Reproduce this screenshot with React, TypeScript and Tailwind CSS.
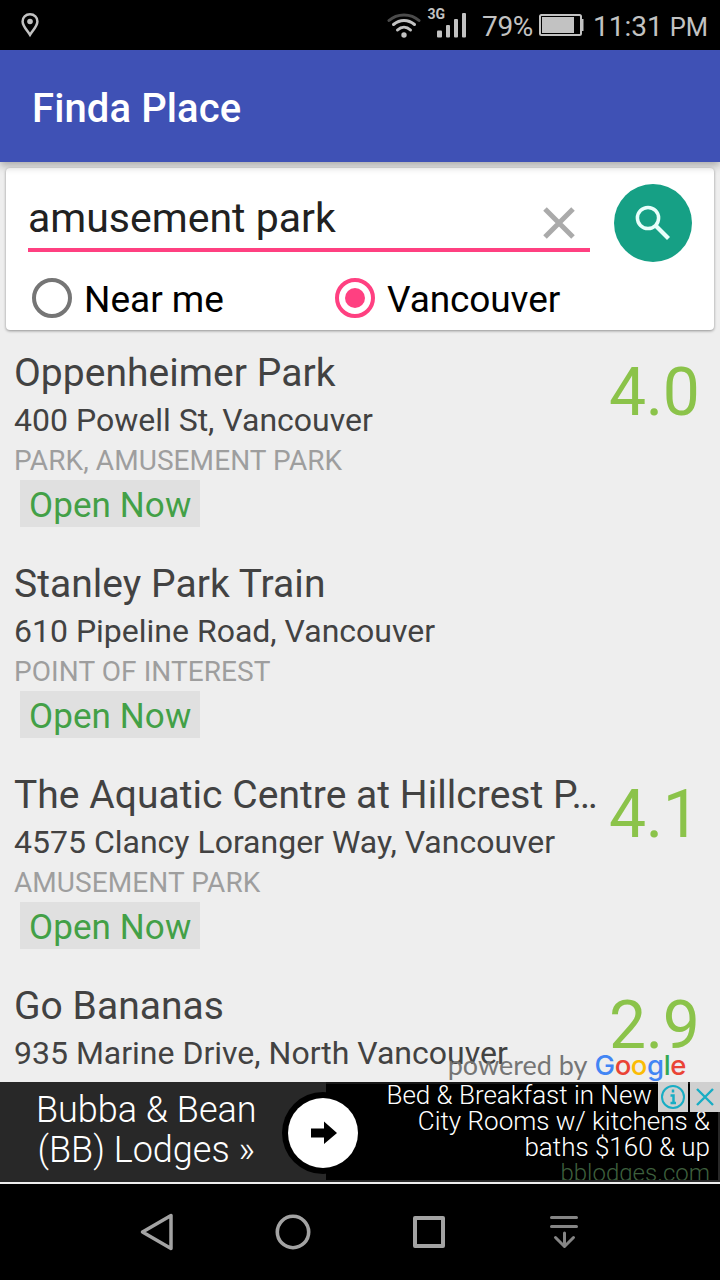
import React from "react";

type Place = { name: string; address: string; kinds: string; rating?: string };

const places: Place[] = [
  { name: "Oppenheimer Park", address: "400 Powell St, Vancouver", kinds: "PARK, AMUSEMENT PARK", rating: "4.0" },
  { name: "Stanley Park Train", address: "610 Pipeline Road, Vancouver", kinds: "POINT OF INTEREST" },
  { name: "The Aquatic Centre at Hillcrest P…", address: "4575 Clancy Loranger Way, Vancouver", kinds: "AMUSEMENT PARK", rating: "4.1" },
  { name: "Go Bananas", address: "935 Marine Drive, North Vancouver", kinds: "AMUSEMENT PARK", rating: "2.9" },
];

function StatusBar() {
  return (
    <div className="flex h-[50px] shrink-0 items-center bg-black pl-[20px] pr-[12px] text-[#c2c2c2]">
      <svg className="h-[26px] w-[20px]" viewBox="0 0 20 26" fill="none">
        <path d="M10 2.3C5.6 2.3 2.6 5.5 2.6 9.4C2.6 14 7 18 10 22.8C13 18 17.4 14 17.4 9.4C17.4 5.5 14.4 2.3 10 2.3Z" stroke="currentColor" strokeWidth="2.5" />
        <circle cx="10" cy="9.5" r="2.8" fill="currentColor" />
      </svg>
      <div className="flex-1" />
      <svg className="h-[50px] w-[84px]" viewBox="387 0 84 50" fill="none" strokeLinecap="round">
        <path d="M389 20.5C397 13 411 13 419 20.5" stroke="#4b4b4b" strokeWidth="3" />
        <path d="M393.5 24.5C400 19 408 19 414.5 24.5" stroke="currentColor" strokeWidth="3" />
        <path d="M397.5 30C401.5 26.2 406.5 26.2 410.500 30" stroke="currentColor" strokeWidth="3" />
        <circle cx="404" cy="35" r="2.7" fill="currentColor" />
        <rect x="437" y="30.500" width="5" height="7" rx="1" fill="currentColor" />
        <rect x="446" y="25" width="4" height="12.500" rx="1" fill="currentColor" />
        <rect x="454" y="19" width="4" height="18.500" rx="1" fill="currentColor" />
        <rect x="462" y="13" width="4" height="24.500" rx="1" fill="currentColor" />
        <text x="427.500" y="18.800" fontSize="14" fontWeight="700" fill="currentColor" className="font-[Roboto]">3G</text>
      </svg>
      <span className="ml-[11px] w-[56px] whitespace-nowrap text-[28px] leading-[50px] tracking-[-0.3px] pt-[3px]">79%</span>
      <svg className="h-[24px] w-[48px]" viewBox="0 0 48 24" fill="none">
        <rect x="2" y="2" width="41" height="20" rx="1.500" stroke="currentColor" strokeWidth="2" />
        <rect x="4" y="4" width="32" height="16" fill="currentColor" />
        <path d="M43 6H45.500V18H43Z" fill="currentColor" />
      </svg>
      <span className="ml-[7px] whitespace-nowrap text-[28px] leading-[50px] pt-[4px]">
        11:31 <span className="text-[25.5px]">PM</span>
      </span>
    </div>
  );
}

function SearchCard() {
  return (
    <div className="px-[6px] pt-[6px]">
      <div className="flex h-[162px] flex-col rounded-[4px] bg-white shadow-[0_1px_3px_rgba(0,0,0,0.4)]">
        <div className="flex h-[102px] pl-[22px]">
          <div className="mt-[16px] flex h-[68px] w-[562px] items-center justify-between border-b-4 border-[#ff4081]">
            <span className="mt-[3px] text-[41px] leading-[50px] text-[#212121]">amusement park</span>
            <svg className="mr-[14px] mt-[13px] h-[34px] w-[34px]" viewBox="0 0 34 34">
              <path d="M3 3L31 31M31 3L3 31" stroke="#aaaaaa" strokeWidth="5" />
            </svg>
          </div>
          <svg className="ml-[23px] mt-[15px] h-[80px] w-[80px]" viewBox="0 0 80 80" fill="none">
            <circle cx="40" cy="40" r="39" fill="#16a085" />
            <circle cx="35" cy="35" r="10.600" stroke="#e8fffb" strokeWidth="3.500" />
            <path d="M42.500 42.500L55.500 55.500" stroke="#e8fffb" strokeWidth="4.200" />
          </svg>
        </div>
        <div className="flex h-[56px] text-[37px] leading-[52px] text-black">
          <div className="flex w-[303px] items-center pl-[26px]">
            <span className="h-[40px] w-[40px] rounded-full border-4 border-[#757575]" />
            <span className="ml-[12px] mt-[3px]">Near me</span>
          </div>
          <div className="flex items-center pl-[26px]">
            <span className="flex h-[40px] w-[40px] items-center justify-center rounded-full border-4 border-[#ff4081]">
              <span className="h-[20px] w-[20px] rounded-full bg-[#ff4081]" />
            </span>
            <span className="ml-[12px] mt-[3px] tracking-[-0.1px]">Vancouver</span>
          </div>
        </div>
      </div>
    </div>
  );
}

function PlaceRow({ place }: { place: Place }) {
  return (
    <div className="flex h-[211px] shrink-0 pl-[14px]">
      <div className="flex w-[596px] shrink-0 flex-col items-start">
        <div className="whitespace-nowrap pt-px text-[39px] leading-[46px] tracking-[0.04px] text-[#424242]">{place.name}</div>
        <div className="mt-[5px] whitespace-nowrap text-[32px] leading-[38px] text-[#424242]">{place.address}</div>
        <div className="mt-[5px] whitespace-nowrap text-[28px] leading-[33px] tracking-[0.08px] text-[#9e9e9e]">{place.kinds}</div>
        <div className="ml-[6px] mt-[3px] h-[47px] w-[180px] whitespace-nowrap bg-[#e0e0e0] pl-[9px] pt-[4px] text-[35px] leading-[43px] tracking-[0.1px] text-[#43a047]">
          Open Now
        </div>
      </div>
      {place.rating && <div className="-ml-px mt-[6px] whitespace-nowrap text-[66px] leading-[76px] tracking-[-0.4px] text-[#8bc34a]">{place.rating}</div>}
    </div>
  );
}

function PoweredBy() {
  return (
    <div className="absolute bottom-0 right-[34px] flex items-baseline whitespace-nowrap font-[Lato] leading-[34px]">
      <span className="mr-[7px] text-[27px] text-[#757575]">powered by</span>
      <span className="font-[Inter] text-[27.5px] font-medium tracking-[-0.4px]">
        <span className="text-[#4285f4]">G</span>
        <span className="text-[#ea4335]">o</span>
        <span className="text-[#fbbc05]">o</span>
        <span className="text-[#4285f4]">g</span>
        <span className="text-[#34a853]">l</span>
        <span className="text-[#ea4335]">e</span>
      </span>
    </div>
  );
}

function AdBanner() {
  return (
    <div className="relative flex h-[100px] shrink-0 overflow-hidden bg-[#282828] font-light text-white">
      <div className="w-[326px] shrink-0 pl-[36px] pt-[8px] text-[36px] leading-[40px] whitespace-nowrap">
        <div>Bubba &amp; Bean</div>
        <div className="pl-[1.5px]">(BB) Lodges »</div>
      </div>
      <div className="mb-[2px] mr-[2px] flex-1 overflow-hidden border-t-2 border-[#181818] bg-black pr-[8px] text-right text-[26px] leading-[26px] whitespace-nowrap">
        <div className="-mt-[2px] pr-[58px]">Bed &amp; Breakfast in New</div>
        <div>City Rooms w/ kitchens &amp;</div>
        <div>baths $160 &amp; up</div>
        <div className="text-[24px] text-[#3d5f3d]">bblodges.com</div>
      </div>
      <svg className="absolute left-[282px] top-[9px] h-[84px] w-[84px]" viewBox="0 0 84 84">
        <circle cx="41" cy="42" r="41" fill="#000" />
        <circle cx="41" cy="42" r="35" fill="#fff" />
        <path d="M29 37.500H42V30.500L55 42L42 53V46.500H29Z" fill="#000" />
      </svg>
      <svg className="absolute right-0 top-0 h-[30px] w-[62px]" viewBox="0 0 62 30" fill="none">
        <rect width="30" height="30" fill="#d0d0d0" />
        <rect x="32" width="30" height="30" fill="#d0d0d0" />
        <circle cx="15" cy="15" r="11" stroke="#18adc4" strokeWidth="2" />
        <path d="M15 7.500V10.500M12.500 13.500H15.500V21M12.500 21H18" stroke="#18adc4" strokeWidth="2.500" />
        <path d="M39 7L55 23M55 7L39 23" stroke="#18adc4" strokeWidth="2.400" />
      </svg>
    </div>
  );
}

function NavBar() {
  return (
    <div className="flex h-[96px] shrink-0 bg-black">
      <svg className="h-[96px] w-[720px]" viewBox="0 0 720 96" fill="none" stroke="#a3a3a3" strokeWidth="4" strokeLinejoin="round" strokeLinecap="round">
        <path d="M171 31.500V64.500L142.500 48Z" strokeWidth="3.500" />
        <circle cx="293" cy="48" r="15.700" strokeWidth="3.600" />
        <rect x="415" y="34" width="28" height="28" />
        <path d="M551.500 33.500H576.500M551.500 42.500H576.500M564.500 49V62M555.500 53.500L564.500 62.500L573.500 53.500" strokeWidth="3" stroke="#858585" />
      </svg>
    </div>
  );
}

export default function App() {
  return (
    <div className="flex h-[1280px] w-[720px] flex-col overflow-hidden bg-[#eeeeee] font-[Roboto,sans-serif]">
      <StatusBar />
      <header className="z-10 flex h-[112px] shrink-0 items-center bg-[#3f51b5] pl-[32px] pt-[6px] text-[40px] font-medium tracking-[0.1px] text-white shadow-[0_4px_8px_rgba(0,0,0,0.28)]">
        Finda Place
      </header>
      <main className="relative h-[920px] shrink-0 overflow-hidden">
        <SearchCard />
        <div className="flex flex-col pt-[19px]">
          {places.map((place) => (
            <PlaceRow key={place.name} place={place} />
          ))}
        </div>
        <PoweredBy />
      </main>
      <AdBanner />
      <div className="h-[2px] shrink-0 bg-[#eeeeee]" />
      <NavBar />
    </div>
  );
}
